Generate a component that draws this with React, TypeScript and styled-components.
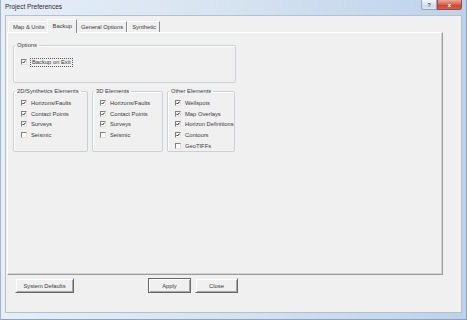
import React from "react";
import styled, { createGlobalStyle } from "styled-components";

const Global = createGlobalStyle`
  html, body { margin: 0; padding: 0; }
  body {
    width: 467px;
    height: 320px;
    overflow: hidden;
    background: #ffffff;
    font-family: "Liberation Sans", Arial, sans-serif;
  }
`;

const TEXT = "#3a3a3a";
const FS = "5.8px";

const Window = styled.div`
  width: 467px;
  height: 320px;
  box-sizing: border-box;
  display: flex;
  flex-direction: column;
  background: linear-gradient(to right, #e6eef7 0%, #d8e4f1 45%, #bdd2ea 100%);
  border-left: 1px solid #a3b5cb;
  border-right: 1px solid #8ea3bd;
  border-bottom: 1px solid #8ea3bd;
`;

const TitleBar = styled.div`
  height: 15px;
  display: flex;
  align-items: flex-start;
  flex-shrink: 0;
`;

const Title = styled.span`
  font-size: 6.5px;
  line-height: 14px;
  color: #2a2a2a;
  padding-left: 4px;
`;

const TitleButtons = styled.div`
  margin-left: auto;
  margin-right: 4px;
  display: flex;
`;

const CaptionButton = styled.div<{ $close?: boolean }>`
  width: ${(p) => (p.$close ? 25 : 16)}px;
  height: 10px;
  box-sizing: border-box;
  display: flex;
  align-items: center;
  justify-content: center;
  border: 1px solid ${(p) => (p.$close ? "#9a4a3e" : "#96a7bc")};
  border-top: none;
  border-radius: ${(p) => (p.$close ? "0 0 3px 0" : "0 0 0 3px")};
  background: ${(p) =>
    p.$close
      ? "linear-gradient(#eaa89a 0%, #d9624c 50%, #c6412c 51%, #da6049 100%)"
      : "linear-gradient(#f0f4f9 0%, #dae4f0 50%, #cad8e9 51%, #dde7f2 100%)"};
  color: ${(p) => (p.$close ? "#ffffff" : "#4a5a6e")};
  font-size: 6px;
  font-weight: bold;
  line-height: 1;
`;

const Client = styled.div`
  flex: 1;
  margin: 0 4px 6px 4px;
  background: #f0f0f0;
  border: 1px solid #b3c1d1;
  display: flex;
  flex-direction: column;
  min-height: 0;
`;

const TabStrip = styled.div`
  height: 16px;
  margin-left: 2px;
  display: flex;
  align-items: flex-end;
  flex-shrink: 0;
`;

const Tab = styled.div<{ $active?: boolean }>`
  position: relative;
  z-index: ${(p) => (p.$active ? 1 : 0)};
  box-sizing: border-box;
  height: ${(p) => (p.$active ? 14 : 11)}px;
  margin: ${(p) => (p.$active ? "0 -1px -1px -2px" : "0")};
  padding: ${(p) => (p.$active ? "0 4px 2px 5px" : "0 3px 0 4px")};
  display: flex;
  align-items: center;
  background: #f0f0f0;
  border-top: 1px solid #ffffff;
  border-left: 1px solid #ffffff;
  border-right: 1px solid #8c8c8c;
  border-top-left-radius: 1px;
  font-size: ${FS};
  color: ${TEXT};
  white-space: nowrap;
`;

const Panel = styled.div`
  width: 436px;
  height: 243px;
  margin-left: 1px;
  box-sizing: border-box;
  border-top: 1px solid #ffffff;
  border-left: 1px solid #ffffff;
  border-right: 1px solid #9c9c9c;
  border-bottom: 1px solid #9c9c9c;
  box-shadow: inset -1px -1px 0 #d4d4d4;
  padding: 9px 0 0 5px;
  flex-shrink: 0;
`;

const Group = styled.fieldset<{ $w: number }>`
  width: ${(p) => p.$w}px;
  box-sizing: border-box;
  margin: 0;
  padding: 0;
  min-width: 0;
  border: 1px solid #cbd0d5;
  border-radius: 2px;
  box-shadow: inset 1px 1px 0 #ffffff;
`;

const Legend = styled.legend`
  margin-left: 1px;
  padding: 0 2px;
  font-size: ${FS};
  line-height: 7px;
  color: ${TEXT};
  white-space: nowrap;
`;

const GroupBody = styled.div<{ $pt: number; $pb: number }>`
  padding: ${(p) => p.$pt}px 0 ${(p) => p.$pb}px 7px;
  display: flex;
  flex-direction: column;
`;

const GroupRow = styled.div`
  margin-top: 5px;
  display: flex;
  align-items: stretch;
  gap: 4px;
`;

const CheckRow = styled.div<{ $h: number }>`
  height: ${(p) => p.$h}px;
  display: flex;
  align-items: center;
  gap: 4px;
  font-size: ${FS};
  color: ${TEXT};
  white-space: nowrap;
`;

const Box = styled.span`
  width: 6px;
  height: 6px;
  flex-shrink: 0;
  box-sizing: border-box;
  background: #ffffff;
  border-top: 1px solid #808080;
  border-left: 1px solid #808080;
  border-right: 1px solid #e2e2e2;
  border-bottom: 1px solid #e2e2e2;
  display: flex;
  align-items: center;
  justify-content: center;
`;

const Focus = styled.span`
  outline: 1px dotted #555555;
  outline-offset: 0;
  padding: 0 1px;
  line-height: 7px;
`;

const ButtonRow = styled.div`
  margin-top: 3px;
  padding-left: 9px;
  display: flex;
  gap: 4px;
`;

const Button = styled.div<{ $w: number; $default?: boolean; $push?: number }>`
  width: ${(p) => p.$w}px;
  height: 15px;
  box-sizing: border-box;
  margin-left: ${(p) => p.$push ?? 0}px;
  display: flex;
  align-items: center;
  justify-content: center;
  background: #f0f0f0;
  border: 1px solid ${(p) => (p.$default ? "#666666" : "transparent")};
  border-right-color: #666666;
  border-bottom-color: #666666;
  box-shadow: inset 1px 1px 0 #ffffff, inset -1px -1px 0 #a8a8a8;
  font-size: ${FS};
  color: ${TEXT};
  white-space: nowrap;
`;

const Check = ({ on }: { on: boolean }) => (
  <Box>
    {on && (
      <svg width="4" height="4" viewBox="0 0 4 4">
        <path d="M0.3 1.8 L1.5 3 L3.7 0.6" stroke="#222" strokeWidth="1" fill="none" />
      </svg>
    )}
  </Box>
);

type Item = { label: string; on: boolean };

const groups: { title: string; w: number; items: Item[] }[] = [
  {
    title: "2D/Synthetics Elements",
    w: 75,
    items: [
      { label: "Horizons/Faults", on: true },
      { label: "Contact Points", on: true },
      { label: "Surveys", on: true },
      { label: "Seismic", on: false },
    ],
  },
  {
    title: "3D Elements",
    w: 71,
    items: [
      { label: "Horizons/Faults", on: true },
      { label: "Contact Points", on: true },
      { label: "Surveys", on: true },
      { label: "Seismic", on: false },
    ],
  },
  {
    title: "Other Elements",
    w: 68,
    items: [
      { label: "Wellspots", on: true },
      { label: "Map Overlays", on: true },
      { label: "Horizon Definitions", on: true },
      { label: "Contours", on: true },
      { label: "GeoTIFFs", on: false },
    ],
  },
];

const tabs = ["Map & Units", "Backup", "General Options", "Synthetic"];

export default function App() {
  return (
    <>
      <Global />
      <Window>
        <TitleBar>
          <Title>Project Preferences</Title>
          <TitleButtons>
            <CaptionButton>?</CaptionButton>
            <CaptionButton $close>x</CaptionButton>
          </TitleButtons>
        </TitleBar>
        <Client>
          <TabStrip>
            {tabs.map((t) => (
              <Tab key={t} $active={t === "Backup"}>
                {t}
              </Tab>
            ))}
          </TabStrip>
          <Panel>
            <Group $w={223}>
              <Legend>Options</Legend>
              <GroupBody $pt={8} $pb={15}>
                <CheckRow $h={10}>
                  <Check on />
                  <Focus>Backup on Exit</Focus>
                </CheckRow>
              </GroupBody>
            </Group>
            <GroupRow>
              {groups.map((g) => (
                <Group key={g.title} $w={g.w}>
                  <Legend>{g.title}</Legend>
                  <GroupBody $pt={2.5} $pb={0}>
                    {g.items.map((it) => (
                      <CheckRow key={it.label} $h={10.75}>
                        <Check on={it.on} />
                        <span>{it.label}</span>
                      </CheckRow>
                    ))}
                  </GroupBody>
                </Group>
              ))}
            </GroupRow>
          </Panel>
          <ButtonRow>
            <Button $w={59}>System Defaults</Button>
            <Button $w={43} $default $push={70}>
              Apply
            </Button>
            <Button $w={43}>Close</Button>
          </ButtonRow>
        </Client>
      </Window>
    </>
  );
}
